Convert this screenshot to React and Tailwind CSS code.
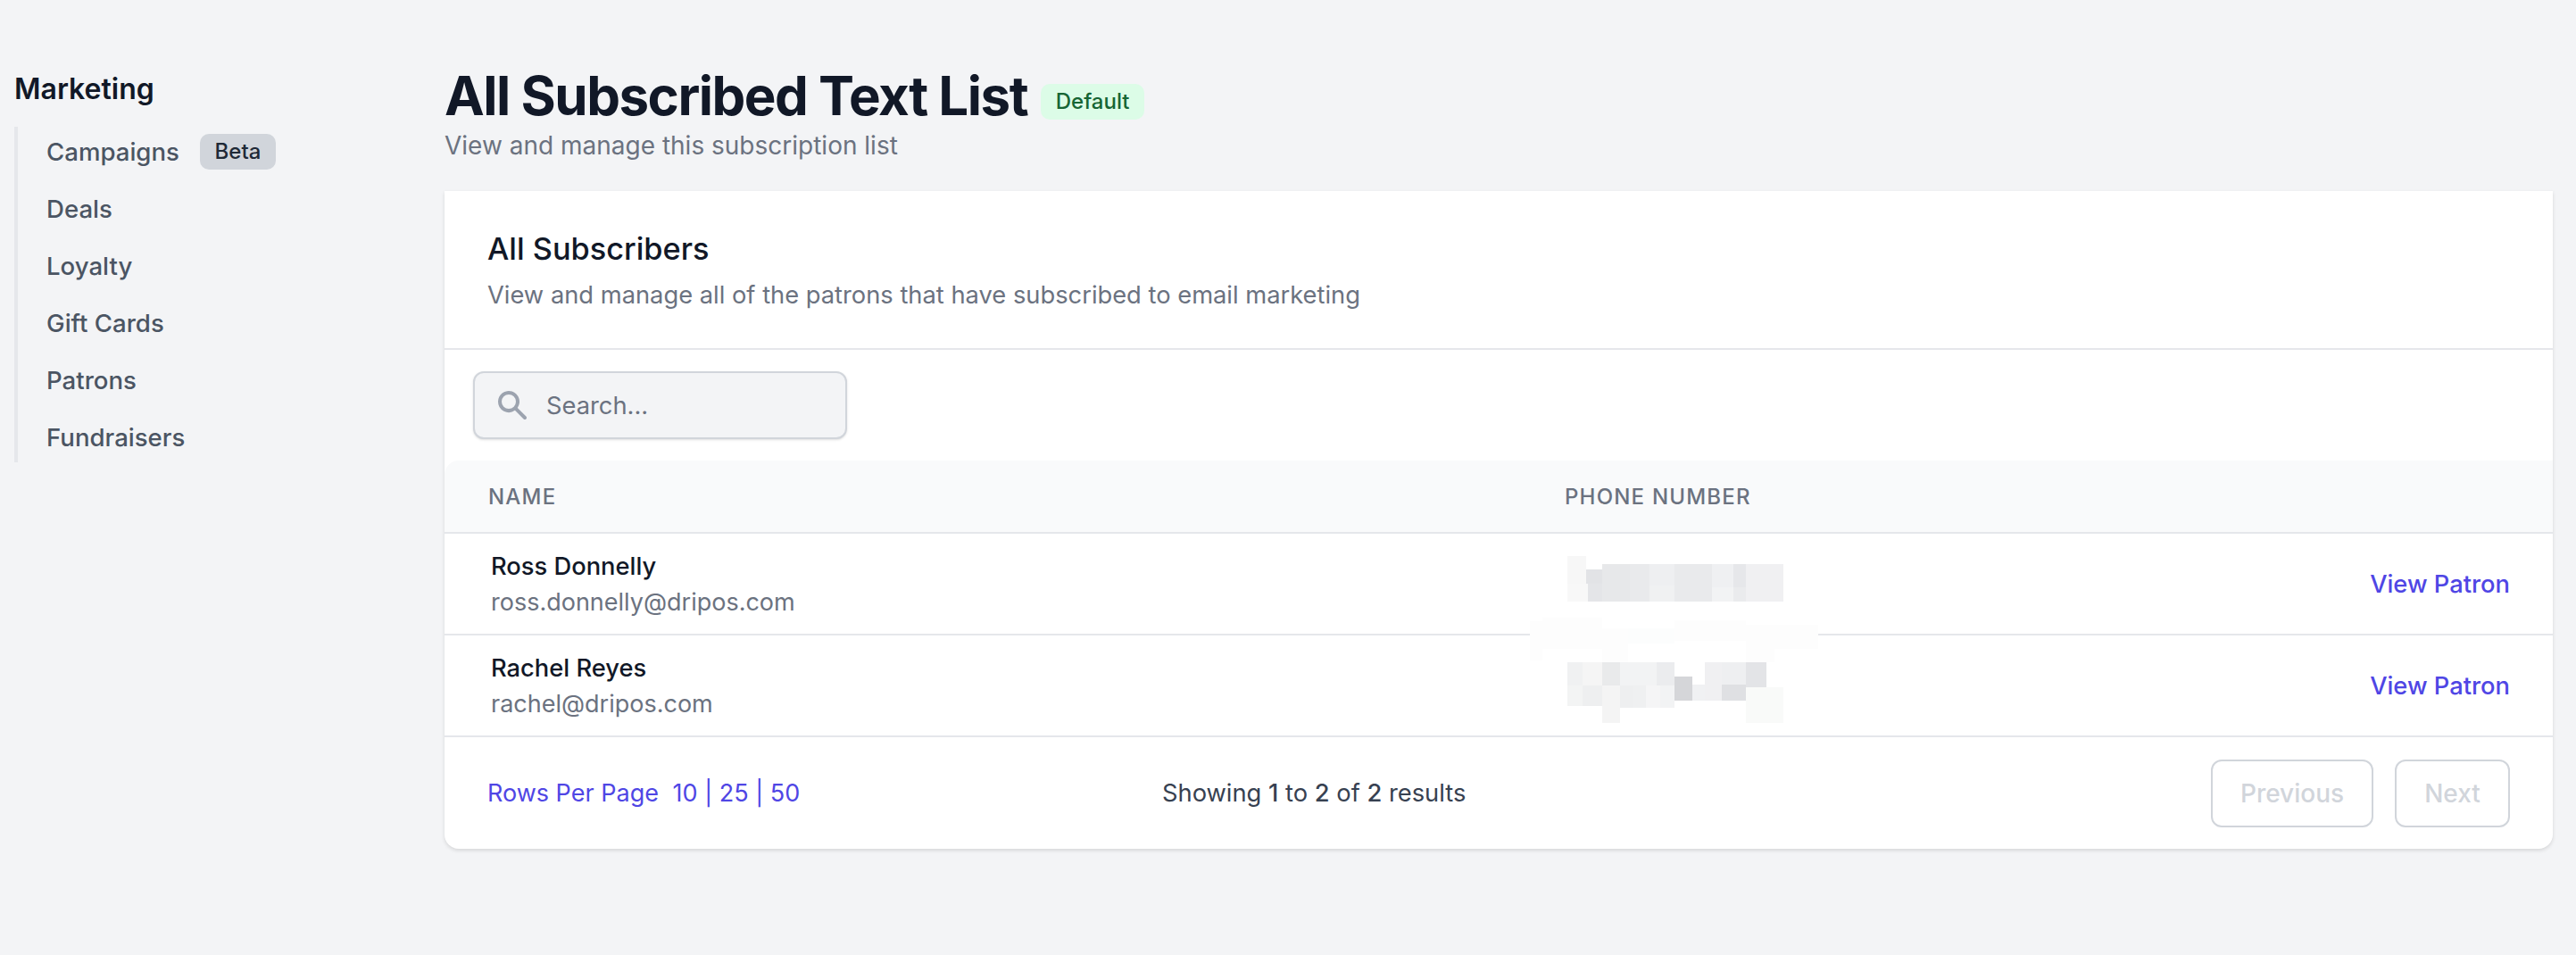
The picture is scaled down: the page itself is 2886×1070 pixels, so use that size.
import React from 'react';

const navItems = ['Campaigns', 'Deals', 'Loyalty', 'Gift Cards', 'Patrons', 'Fundraisers'];

const subscribers = [
  { name: 'Ross Donnelly', email: 'ross.donnelly@dripos.com' },
  { name: 'Rachel Reyes', email: 'rachel@dripos.com' },
];

// pixelated phone numbers, coordinates in 1/3 px
const smudge = [
  [102, 528, 42, 132, '#fdfdfd'], [144, 516, 201, 104, '#fdfdfd'], [345, 552, 88, 114, '#fdfdfd'],
  [433, 552, 155, 50, '#fcfdfd'], [588, 525, 240, 70, '#fdfdfd'], [828, 540, 243, 80, '#fdfdfd'],
  [828, 620, 96, 45, '#fdfdfd'],
];
const blocks = [
  [228, 309, 63, 93, '#f7f7f7'], [228, 402, 69, 60, '#f8f8f8'], [291, 354, 54, 48, '#e2e3e6'],
  [297, 402, 48, 60, '#e4e5e8'], [345, 336, 93, 126, '#e7e8ea'], [438, 336, 66, 126, '#e9eaec'],
  [504, 336, 84, 72, '#eeeff1'], [504, 408, 84, 54, '#f0f1f2'], [588, 336, 126, 126, '#e9eaec'],
  [714, 336, 72, 78, '#eff0f2'], [714, 414, 72, 48, '#f2f3f4'], [786, 336, 42, 78, '#e6e7ea'],
  [786, 414, 42, 48, '#eaebed'], [828, 336, 126, 126, '#f0f0f2'],
  [228, 666, 50, 78, '#f0f1f2'], [278, 666, 67, 78, '#f5f5f5'], [345, 666, 60, 78, '#e9eaeb'],
  [405, 666, 123, 78, '#f2f3f4'], [528, 666, 60, 78, '#ebecee'], [588, 714, 60, 81, '#d5d6d9'],
  [648, 741, 42, 54, '#f0f1f3'], [690, 666, 57, 129, '#f0f0f2'], [747, 666, 81, 75, '#eeeff1'],
  [747, 741, 81, 54, '#dfe0e3'], [828, 666, 69, 84, '#e3e4e7'], [828, 750, 126, 120, '#f9faf9'],
  [228, 744, 51, 69, '#f3f4f4'], [279, 744, 66, 69, '#eeeff0'], [345, 744, 60, 126, '#f4f4f4'],
  [405, 744, 45, 75, '#eeeff0'], [450, 744, 42, 75, '#eff0f1'], [492, 744, 48, 75, '#f5f5f6'],
  [540, 744, 48, 75, '#f2f3f4'],
];

const Sidebar = () => (
  <aside className="w-[498px] shrink-0 pt-[76px] pl-4">
    <h2 className="text-[32px] leading-[48px] font-semibold text-[#111827]">Marketing</h2>
    <nav className="mt-[18px] flex flex-col gap-2 border-l-4 border-[#e5e7eb] pl-8">
      {navItems.map((item) => (
        <div key={item} className="flex h-14 items-center pt-[2px] text-[27.6px] font-[450] text-[#4b5563]">
          {item}
          {item === 'Campaigns' && (
            <span className="-mt-[2px] ml-[23px] flex h-10 w-[85px] items-center justify-center rounded-[10px] bg-[#d1d5db] text-2xl font-[450] text-[#1f2937]">
              Beta
            </span>
          )}
        </div>
      ))}
    </nav>
  </aside>
);

const SubscriberRow = ({ name, email }) => (
  <div className="grid h-[114px] grid-cols-[1255px_1fr_auto] items-center border-b-2 border-[#e5e7eb] pr-12">
    <div className="pt-[2px] pl-[52px]">
      <div className="text-[27.3px] leading-10 font-[450] text-[#111827]">{name}</div>
      <div className="text-[27px] leading-10 text-[#6b7280]">{email}</div>
    </div>
    <div />
    <a className="pt-[2px] text-[27.3px] font-[450] text-[#4f46e5]">View Patron</a>
  </div>
);

export default function App() {
  return (
    <div className="flex min-h-screen bg-[#f3f4f6] pr-[26px] font-['Inter',sans-serif]">
      <Sidebar />
      <main className="min-w-0 flex-1 pt-[71px]">
        <div className="flex items-center">
          <h1 className="text-[60px] leading-[72px] font-bold tracking-tight text-[#111827]">All Subscribed Text List</h1>
          <span className="mt-[13px] ml-[15px] flex h-10 w-[116px] items-center justify-center rounded-[10px] bg-[#dcfce7] text-2xl font-[450] text-[#166534]">
            Default
          </span>
        </div>
        <p className="text-[28px] leading-10 text-[#6b7280]">View and manage this subscription list</p>

        <section className="mt-[31px] rounded-b-[16px] bg-white shadow-[0_2px_4px_rgba(0,0,0,0.12)]">
          <div className="h-[178px] border-b-2 border-[#e5e7eb] px-12 pt-[41px]">
            <h3 className="text-[34.3px] leading-[48px] font-[450] text-[#111827]">All Subscribers</h3>
            <p className="mt-[8px] text-[27.3px] leading-10 text-[#6b7280]">
              View and manage all of the patrons that have subscribed to email marketing
            </p>
          </div>

          <div className="px-8 pt-6 pb-6">
            <div className="flex h-[76px] w-[419px] items-center rounded-xl border-2 border-[#d1d5db] bg-[#f3f4f6] pl-[22px] shadow-sm">
              <svg className="h-10 w-10 shrink-0 text-[#9ca3af]" viewBox="0 0 20 20" fill="currentColor">
                <path fillRule="evenodd" clipRule="evenodd" d="M8 4a4 4 0 100 8 4 4 0 000-8zM2 8a6 6 0 1110.89 3.476l4.817 4.817a1 1 0 01-1.414 1.414l-4.816-4.816A6 6 0 012 8z" />
              </svg>
              <input
                readOnly
                placeholder="Search..."
                className="mt-[2px] ml-[18px] w-[300px] bg-transparent text-[27.3px] text-[#6b7280] outline-none placeholder:text-[#6b7280]"
              />
            </div>
          </div>

          <div className="grid h-[82px] grid-cols-[1255px_1fr] items-center rounded-tl-[16px] border-b-2 border-[#e5e7eb] bg-[#f9fafb] pt-[1px] text-2xl font-[450] tracking-[0.05em] text-[#6b7280]">
            <div className="pl-[49px] uppercase">Name</div>
            <div className="uppercase">Phone Number</div>
          </div>

          <div className="relative">
            {subscribers.map((s) => (
              <SubscriberRow key={s.email} {...s} />
            ))}
            {/* blurred out numbers sit on top of the rows */}
            <svg className="absolute top-[-78px] left-[1182px]" width="400" height="310" viewBox="0 0 1200 930" shapeRendering="crispEdges">
              {[...smudge, ...blocks].map(([x, y, w, h, fill]) => (
                <rect key={`${x}-${y}`} x={x} y={y} width={w} height={h} fill={fill} />
              ))}
            </svg>
          </div>

          <div className="grid h-[125px] grid-cols-[756px_1fr_auto] items-center px-12">
            <div className="pt-[2px] text-[27px] text-[#4f46e5]">
              Rows Per Page <span className="ml-2">10 | 25 | 50</span>
            </div>
            <div className="pt-[2px] text-[27.3px] text-[#374151]">
              Showing <span className="font-[450]">1</span> to <span className="font-[450]">2</span> of{' '}
              <span className="font-[450]">2</span> results
            </div>
            <div className="flex gap-6 text-[28px]">
              <button className="h-[76px] w-[182px] rounded-xl border-2 border-[#d1d5db] font-[450] text-[#d1d5db]">Previous</button>
              <button className="h-[76px] w-[129px] rounded-xl border-2 border-[#d1d5db] font-[450] text-[#d1d5db]">Next</button>
            </div>
          </div>
        </section>
      </main>
    </div>
  );
}
